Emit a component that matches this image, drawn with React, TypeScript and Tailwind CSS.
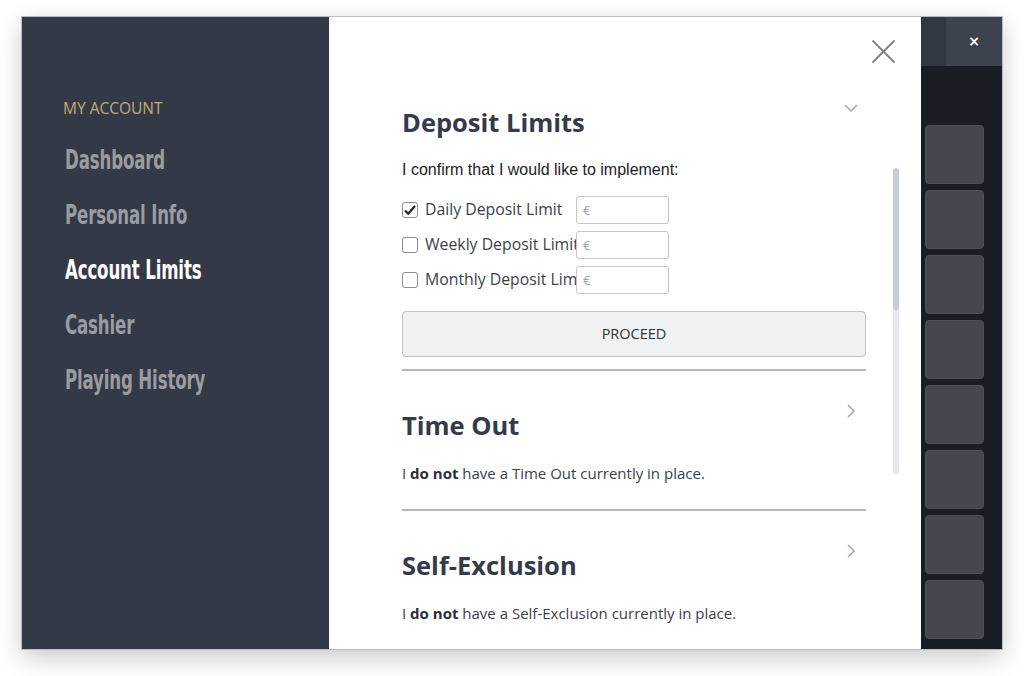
import React, { useState } from 'react';

const navItems = ['Dashboard', 'Personal Info', 'Account Limits', 'Cashier', 'Playing History'];

const limits = [
  { label: 'Daily Deposit Limit', checked: true },
  { label: 'Weekly Deposit Limit', checked: false },
  { label: 'Monthly Deposit Limit', checked: false },
];

const ChevronRight = () => (
  <svg width="10" height="16" viewBox="0 0 10 16" fill="none" stroke="#a3a7ae" strokeWidth="1.5">
    <path d="M2 2l6 6-6 6" />
  </svg>
);

const App: React.FC = () => {
  const [checks, setChecks] = useState(limits.map((l) => l.checked));

  return (
    <div className="w-[1024px] h-[676px] bg-white pt-[17px] pl-[22px]">
      <div className="w-[980px] h-[632px] flex shadow-[0_0_0_1px_#b9bcc2,0_8px_24px_rgba(0,0,0,0.22)]">
        {/* Sidebar */}
        <div className="w-[307px] bg-[#333947] pl-[41px] pt-[80px]">
          <div className="text-[15.5px] text-[#c4ad6b] uppercase font-['Open_Sans',sans-serif] mb-[25px]">My Account</div>
          <ul className="flex flex-col gap-[24px] pl-[2px]">
            {navItems.map((item) => (
              <li
                key={item}
                className={`text-[26px] leading-[31px] font-bold font-['DejaVu_Sans_Condensed',sans-serif] origin-left scale-x-[0.71] tracking-[-0.2px] whitespace-nowrap ${
                  item === 'Account Limits' ? 'text-white' : 'text-[#9a9ca3]'
                }`}
              >
                {item}
              </li>
            ))}
          </ul>
        </div>

        {/* Main panel */}
        <div className="relative w-[592px] bg-white overflow-hidden pl-[73px] pt-[88px] font-['Open_Sans',sans-serif]">
          {/* close */}
          <button className="absolute left-[542px] top-[22px]">
            <svg width="25" height="25" viewBox="0 0 25 25" fill="none" stroke="#7b818c" strokeWidth="1.8">
              <path d="M1.5 1.5l22 22M23.5 1.5l-22 22" />
            </svg>
          </button>
          {/* scrollbar */}
          <div className="absolute left-[564px] top-[151px] w-[6px] h-[306px] rounded-full bg-[#e9e9ed]">
            <div className="h-[142px] rounded-full bg-[#c8ccd6]" />
          </div>

          <div className="w-[464px]">
            {/* Deposit limits */}
            <div className="relative">
              <h2 className="text-[25.5px] leading-[34px] font-bold text-[#343a48]">Deposit Limits</h2>
              <div className="absolute right-[7px] top-[-2px]">
                <svg width="16" height="10" viewBox="0 0 16 10" fill="none" stroke="#a3a7ae" strokeWidth="1.5">
                  <path d="M2 2l6 6 6-6" />
                </svg>
              </div>
            </div>
            <p className="mt-[20px] text-[16px] leading-[22px] text-[#1d1d1f] font-['Liberation_Sans',sans-serif]">
              I confirm that I would like to implement:
            </p>
            <div className="mt-[15px] flex flex-col gap-[7px]">
              {limits.map((l, i) => (
                <div key={l.label} className="flex items-center h-[28px]">
                  <label className="flex items-center w-[174px] overflow-hidden whitespace-nowrap cursor-pointer">
                    <span
                      onClick={() => setChecks(checks.map((c, j) => (j === i ? !c : c)))}
                      className="shrink-0 w-[16px] h-[16px] rounded-[3px] border border-[#8a8d93] bg-white flex items-center justify-center"
                    >
                      {checks[i] && (
                        <svg width="14" height="12" viewBox="0 0 14 12" fill="none" stroke="#222" strokeWidth="2.2">
                          <path d="M2 6.5l3.2 3.2L12 2" />
                        </svg>
                      )}
                    </span>
                    <span className="ml-[7px] text-[15.8px] text-[#3a3f4a]">{l.label}</span>
                  </label>
                  <input
                    placeholder="€"
                    className="w-[93px] h-[28px] rounded-[3px] border border-[#c6c6c6] px-[6px] text-[13px] placeholder:text-[#a0a4aa] outline-none"
                  />
                </div>
              ))}
            </div>
            <button className="mt-[17px] w-full h-[46px] rounded-[4px] border border-[#c2c3c6] bg-[#f0f1f3] text-[14.5px] text-[#333]">
              PROCEED
            </button>
            <div className="mt-[12px] h-[2px] bg-[#b5b6b8]" />

            {/* Time Out */}
            <div className="relative mt-[37px]">
              <h2 className="text-[25.5px] leading-[34px] font-bold text-[#343a48]">Time Out</h2>
              <div className="absolute right-[10px] top-[-5px]">
                <ChevronRight />
              </div>
            </div>
            <p className="mt-[20px] text-[15px] text-[#3a3f4a]">
              I <b className="text-[#2a2f3a]">do not</b> have a Time Out currently in place.
            </p>
            <div className="mt-[24px] h-[2px] bg-[#b5b6b8]" />

            {/* Self-Exclusion */}
            <div className="relative mt-[37px]">
              <h2 className="text-[25.5px] leading-[34px] font-bold text-[#343a48]">Self-Exclusion</h2>
              <div className="absolute right-[10px] top-[-5px]">
                <ChevronRight />
              </div>
            </div>
            <p className="mt-[20px] text-[15px] text-[#3a3f4a]">
              I <b className="text-[#2a2f3a]">do not</b> have a Self-Exclusion currently in place.
            </p>
          </div>
        </div>

        {/* Background app on the right */}
        <div className="flex-1 flex flex-col bg-[#1a1d24]">
          <div className="h-[49px] flex">
            <div className="w-[25px] bg-[#323744]" />
            <div className="flex-1 bg-[#3c424e] flex items-center justify-center text-white text-[14px] font-bold font-['DejaVu_Sans',sans-serif]">
              ×
            </div>
          </div>
          <div className="flex flex-col gap-[6px] pt-[59px] pl-[4px] pr-[18px]">
            {Array.from({ length: 8 }).map((_, i) => (
              <div key={i} className="h-[59px] rounded-[4px] bg-[#45474f] border border-[#4d5059]" />
            ))}
          </div>
        </div>
      </div>
    </div>
  );
};

export default App;
